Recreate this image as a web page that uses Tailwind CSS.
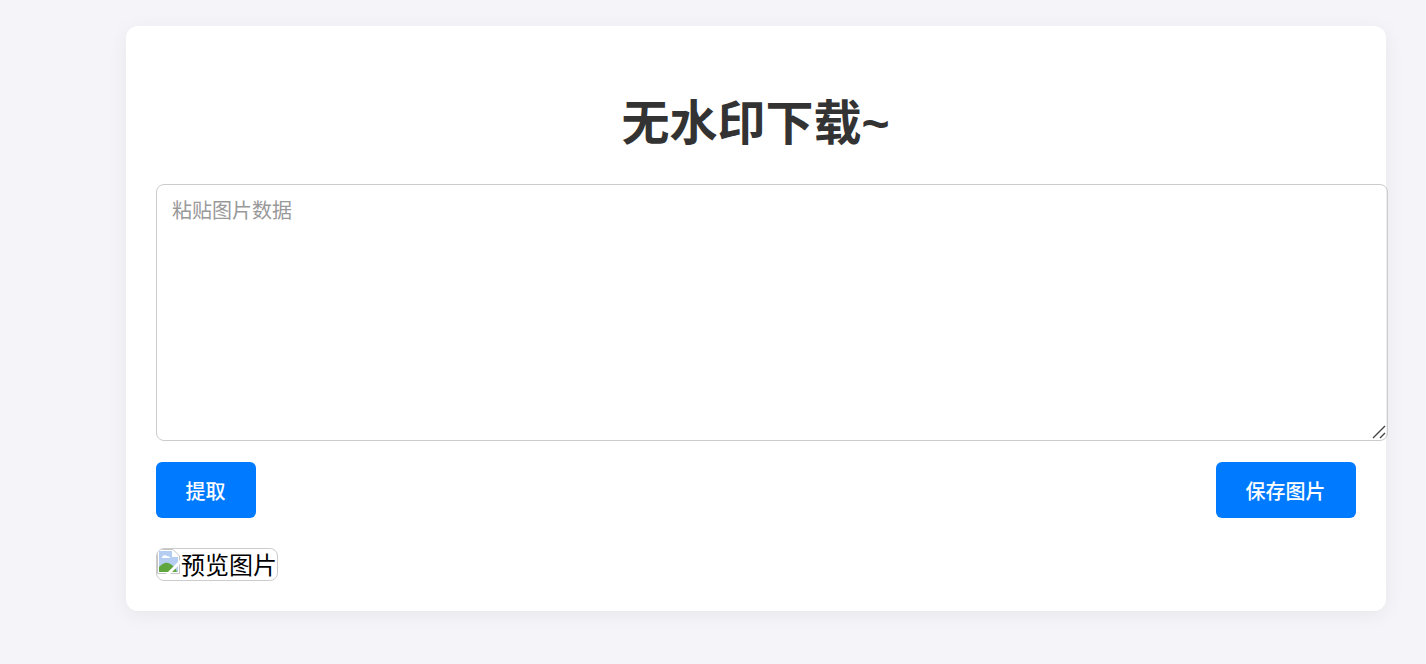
<!DOCTYPE html>
<html lang="zh-CN">
<head>
  <meta charset="UTF-8" />
  <meta name="viewport" content="width=device-width, initial-scale=1.0" />
  <title>无水印下载~</title>
  <script src="https://cdn.jsdelivr.net/npm/@tailwindcss/browser@4"></script>
</head>
<body class="bg-[#f4f4f9] h-[664px] overflow-hidden font-['Liberation_Sans','Noto_Sans_CJK_SC',sans-serif]">
  <!-- Main card -->
  <main class="ml-[126px] mt-[26px] w-[1260px] h-[585px] bg-white rounded-xl shadow-[0_4px_20px_rgba(0,0,0,0.06)] p-[30px]">
    <h1 class="mt-[36px] mb-[28px] pr-[1px] text-center text-[48px] leading-[64px] font-bold text-[#333]">无水印下载~</h1>

    <div class="relative w-[1232px] h-[257px]">
      <textarea placeholder="粘贴图片数据" class="block w-full h-full max-w-none pl-[15px] pr-[16px] py-[12px] border border-[#ccc] rounded-lg text-[20px] leading-[28px] placeholder:text-[#999] resize-none outline-none"></textarea>
      <!-- resize handle -->
      <svg class="absolute right-[2px] bottom-[2px]" width="14" height="14" viewBox="0 0 14 14">
        <path d="M1 13L13 1M8 13L13 8" stroke="#444" stroke-width="1.4" fill="none" />
      </svg>
    </div>

    <div class="flex justify-between mt-[21px]">
      <button class="w-[100px] h-[56px] pt-[3px] pr-[1px] bg-[#007bff] text-white text-[20px] font-medium rounded-md">提取</button>
      <button class="w-[140px] h-[56px] pt-[3px] pr-[1px] bg-[#007bff] text-white text-[20px] font-medium rounded-md">保存图片</button>
    </div>

    <!-- Broken preview image -->
    <div class="mt-[30px] w-[122px] h-[33px] border border-[#ccc] rounded-lg flex items-start overflow-hidden text-[24px] leading-[32px] text-black">
      <svg class="shrink-0" width="24" height="25" viewBox="0 0 24 25">
        <path d="M0.5 0.5H16L22.5 7V24.5H0.5z" fill="#fff" stroke="#c4c4c4" />
        <path d="M2 2H15V8H21V23H2z" fill="#b4cdf0" />
        <path d="M5 8c1-2 4-2 5-1 2 0 3 1 3 2H5z" fill="#fff" />
        <path d="M2 23v-5c3-3 6-5 9-4 3 1 7 3 9 9z" fill="#5fa63f" />
        <path d="M10 26L24 12" stroke="#fff" stroke-width="3" />
      </svg>
      <span class="mt-[1px]">预览图片</span>
    </div>
  </main>
</body>
</html>
